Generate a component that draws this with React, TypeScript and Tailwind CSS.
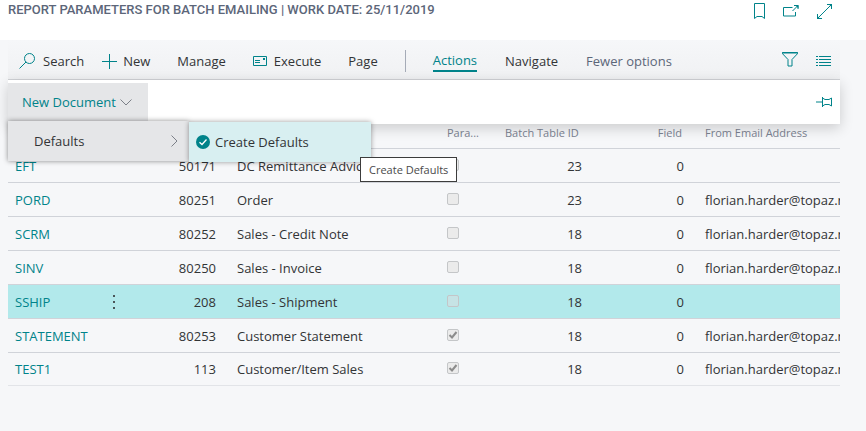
import React from "react";

type Row = {
  code: string;
  report: number;
  name: string;
  params: boolean;
  table: number;
  field: number;
  email: string;
  selected?: boolean;
};

const EMAIL = "florian.harder@topaz.nl";

const rows: Row[] = [
  { code: "EFT", report: 50171, name: "DC Remittance Advice", params: false, table: 23, field: 0, email: "" },
  { code: "PORD", report: 80251, name: "Order", params: false, table: 23, field: 0, email: EMAIL },
  { code: "SCRM", report: 80252, name: "Sales - Credit Note", params: false, table: 18, field: 0, email: EMAIL },
  { code: "SINV", report: 80250, name: "Sales - Invoice", params: false, table: 18, field: 0, email: EMAIL },
  { code: "SSHIP", report: 208, name: "Sales - Shipment", params: false, table: 18, field: 0, email: "", selected: true },
  { code: "STATEMENT", report: 80253, name: "Customer Statement", params: true, table: 18, field: 0, email: EMAIL },
  { code: "TEST1", report: 113, name: "Customer/Item Sales", params: true, table: 18, field: 0, email: EMAIL },
];

function Icon({ w, h, children }: { w: number; h: number; children: React.ReactNode }) {
  return (
    <svg width={w} height={h} viewBox={`0 0 ${w} ${h}`} fill="none" stroke="#00838a" strokeWidth="1" aria-hidden="true" className="shrink-0">
      {children}
    </svg>
  );
}

function Header() {
  return (
    <header className="flex h-10 items-start justify-between bg-white pl-2 pr-[34px]">
      <h1 className="font-['Roboto',sans-serif] text-[13px] leading-5 font-medium whitespace-nowrap text-[#5c6679]">
        REPORT PARAMETERS FOR BATCH EMAILING | WORK DATE: 25/11/2019
      </h1>
      <div className="flex h-[22px] items-center gap-[18px]">
        <button aria-label="Bookmark">
          <Icon w={11} h={16}>
            <path d="M.5.5h10v15l-2.500-2h-5L.5 15.500z" />
          </Icon>
        </button>
        <button aria-label="Open in new window">
          <Icon w={16} h={12}>
            <path d="M9.500 2.500H.5v8.500h12V7M9.500 6 14.500 1M11 .5h4V4" />
            <path d="M12 0h3.500v3.500z" fill="#00838a" stroke="none" />
          </Icon>
        </button>
        <button aria-label="Expand">
          <Icon w={15} h={15}>
            <path d="M.8 14.200 14.200.8M10 .5h4.500V5M.5 10v4.500H5" />
            <path d="M11.500 0H15v3.500zM0 11.500V15h3.500z" fill="#00838a" stroke="none" />
          </Icon>
        </button>
      </div>
    </header>
  );
}

function Toolbar() {
  return (
    <nav className="flex h-10 items-center justify-between border-b border-[#d0d2d6] bg-linear-to-b from-[#f6f7f9] to-[#f0f1f3] pr-[9px] pl-[11px]">
      <div className="flex items-center gap-7 pt-[3px] text-[#323436]">
        <div className="flex items-center gap-[27px]">
          <div className="flex items-center gap-[18px]">
            <button className="flex items-center gap-2">
              <Icon w={16} h={16}>
                <circle cx="10.500" cy="5.500" r="5" />
                <path d="M7 9 .5 15.500" />
              </Icon>
              Search
            </button>
            <button className="flex items-center gap-1.5">
              <Icon w={15} h={15}>
                <path d="M7.500 0v15M0 7.500h15" />
              </Icon>
              New
            </button>
          </div>
          <button>Manage</button>
          <button className="flex items-center gap-[7px]">
            <Icon w={14} h={12}>
              <path d="M.5 1.500h13v9H.5zM2 5.500h5M2 7.500h5" />
              <path d="M10 3h2v2h-2z" fill="#00838a" stroke="none" />
            </Icon>
            Execute
          </button>
          <button>Page</button>
          <span className="h-[22px] w-px bg-[#a5abb7]" />
          <button className="flex h-[22px] items-center border-b-2 border-[#00838a] text-[#00838a]">Actions</button>
        </div>
        <button>Navigate</button>
        <button className="text-[#5c6679]">Fewer options</button>
      </div>
      <div className="flex items-center gap-[18px]">
        <button aria-label="Filter">
          <Icon w={16} h={15}>
            <path d="M.5.5h15v1.200L10 7.500v6.500H6V7.500L.5 1.700z" />
            <path d="M0 1h16" />
          </Icon>
        </button>
        <button aria-label="List view" className="pt-0.5">
          <Icon w={15} h={10}>
            <path d="M3 .5h12M3 3.500h12M3 6.500h12M3 9.500h12M0 .5h2M0 3.500h2M0 6.500h2M0 9.500h2" />
          </Icon>
        </button>
      </div>
    </nav>
  );
}

function ActionPanel() {
  return (
    <div className="relative z-10 flex h-11 items-start justify-between bg-white pt-[3px] pr-2 shadow-[0_4px_14px_rgba(0,0,0,0.18)]">
      <div className="relative">
        <button className="flex h-[38px] w-[140px] items-center gap-1 bg-[#e5e6e8] pl-3.5 text-[#00838a]">
          New Document
          <svg width="12" height="7" viewBox="0 0 12 7" fill="none" stroke="#7c8088" aria-hidden="true">
            <path d="M.5.5 6 6 11.500.5" />
          </svg>
        </button>
        <div className="absolute top-full left-0 w-[181px] bg-[#e5e6e8] shadow-[0_0_5px_rgba(0,0,0,0.45)]">
          <button className="flex h-10 w-full items-center justify-between pr-[11px] pl-[26px] text-[#323436]">
            Defaults
            <svg width="7" height="12" viewBox="0 0 7 12" fill="none" stroke="#7c8088" aria-hidden="true">
              <path d="M.5.5 6 6 .5 11.500" />
            </svg>
          </button>
          <div className="absolute top-px left-full w-[182px] bg-[#d8eff1] shadow-[0_0_5px_rgba(0,0,0,0.4)]">
            <button className="flex h-10 w-full items-center gap-[5px] pl-[7px] text-[#323436]">
              <svg width="14" height="14" viewBox="0 0 14 14" aria-hidden="true">
                <circle cx="7" cy="7" r="7" fill="#00838a" />
                <path d="M3.500 7.200 6 9.500l4.500-5" fill="none" stroke="#fff" strokeWidth="1.300" />
              </svg>
              Create Defaults
            </button>
            <div role="tooltip" className="absolute top-[35px] left-[171px] border border-[#3c3c3c] bg-white px-2 text-[11px] leading-[23px] whitespace-nowrap text-[#4a4a4a]">
              Create Defaults
            </div>
          </div>
        </div>
      </div>
      <button aria-label="Pin" className="flex h-[38px] items-center">
        <Icon w={16} h={10}>
          <path d="M0 5h6M6.500 0v10M6.500 1 9 2.500h4L15.500 1v8L13 7.500H9L6.500 9" />
        </Icon>
      </button>
    </div>
  );
}

function ParamsBox({ row }: { row: Row }) {
  return (
    <span className="grid w-3 pb-0.5">
      <input
        type="checkbox"
        disabled
        checked={row.params}
        readOnly
        aria-label={`Parameters for ${row.code}`}
        className={`col-start-1 row-start-1 size-3 appearance-none rounded-[2px] border border-[#c4c6c8] ${row.selected ? "bg-[#c6e3e5]" : "bg-[#ebebeb]"}`}
      />
      {row.params && (
        <svg width="12" height="12" viewBox="0 0 12 12" fill="none" stroke="#8c8c8c" strokeWidth="2" aria-hidden="true" className="col-start-1 row-start-1">
          <path d="M2.500 6 5 8.500 9.500 3" />
        </svg>
      )}
    </span>
  );
}

function ReportTable() {
  return (
    <table className="w-full table-fixed border-separate border-spacing-0 text-left">
      <colgroup>
        <col className="w-[91px]" />
        <col className="w-[29px]" />
        <col className="w-[95px]" />
        <col className="w-[210px]" />
        <col className="w-[58px]" />
        <col className="w-[98px]" />
        <col className="w-[102px]" />
        <col />
      </colgroup>
      <thead className="text-[11px] leading-[18px] text-[#7b8291]">
        <tr className="h-[25px] align-top whitespace-nowrap *:border-b *:border-[#d0d3d9] *:font-normal">
          <th aria-label="Code" />
          <th aria-label="Row menu" />
          <th aria-label="Report ID" />
          <th aria-label="Report name" />
          <th className="pl-3.5">Para...</th>
          <th className="pl-3.5">Batch Table ID</th>
          <th className="pr-[9px] text-right">Field</th>
          <th className="pl-3.5">From Email Address</th>
        </tr>
      </thead>
      <tbody className="text-[#323436]">
        {rows.map((row) => (
          <tr
            key={row.code}
            className={`h-[34px] whitespace-nowrap *:border-b *:border-[#d0d3d9] last:h-[33px] last:*:border-[#e2e4e8] ${row.selected ? "bg-[#b2e9eb]" : ""}`}
          >
            <td className="pl-[7px]">
              <a href="#" className="text-[#00838a]">
                {row.code}
              </a>
            </td>
            <td>
              {row.selected && (
                <button aria-label="More options" className="flex w-full justify-center">
                  <svg width="2" height="14" viewBox="0 0 2 14" fill="#4a5558" aria-hidden="true">
                    <path d="M0 0h2v2H0zM0 6h2v2H0zM0 12h2v2H0z" />
                  </svg>
                </button>
              )}
            </td>
            <td className="pr-[7px] text-right">{row.report}</td>
            <td className="pl-3.5">{row.name}</td>
            <td className="pl-3.5">
              <ParamsBox row={row} />
            </td>
            <td className="pr-[7px] text-right">{row.table}</td>
            <td className="pr-[7px] text-right">{row.field}</td>
            <td className="overflow-hidden pl-3.5">{row.email}</td>
          </tr>
        ))}
      </tbody>
    </table>
  );
}

export default function App() {
  return (
    <div className="min-h-screen bg-[#f6f7f9] font-['Open_Sans','Noto_Sans',sans-serif] text-[13px] leading-[18px]">
      <Header />
      <main className="pr-[26px] pl-2">
        <Toolbar />
        <ActionPanel />
        <ReportTable />
      </main>
    </div>
  );
}
